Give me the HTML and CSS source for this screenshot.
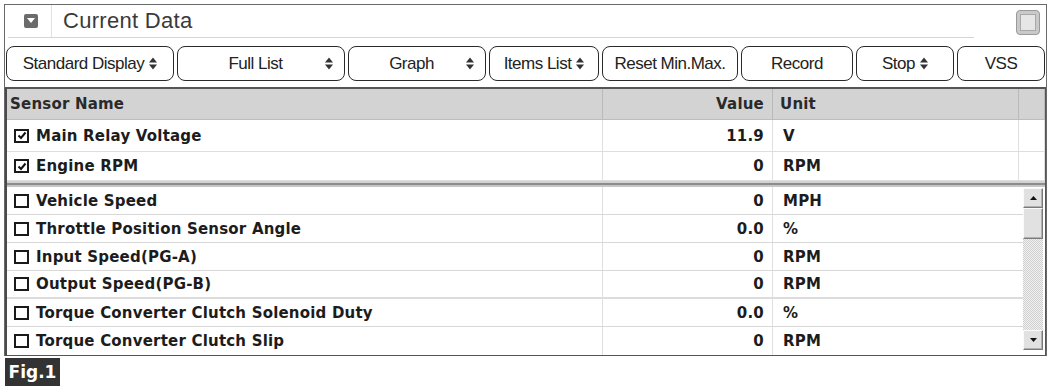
FILE: index.html
```html
<!DOCTYPE html>
<html>
<head>
<meta charset="utf-8">
<link rel="stylesheet" href="styles.css">
</head>
<body>
<div class="window">
  <div class="titlebar">
    <div class="icon-cell">
      <span class="collapse-icon"><svg width="8" height="6" viewBox="0 0 8 6"><polygon points="0,0 8,0 4,5" fill="#fff"/></svg></span>
    </div>
    <div class="title">Current Data</div>
    <div class="max-btn"><span class="max-inner"></span></div>
  </div>
  <div class="title-rule"></div>
  <div class="toolbar">
    <div class="btn btn-inline"><span>Standard Display</span><svg class="spin" width="8" height="13" viewBox="0 0 8 13"><polygon points="0,5.5 4,0.5 8,5.5"/><polygon points="0,7.5 4,12.5 8,7.5"/></svg></div>
    <div class="btn btn-wide"><span class="lbl">Full List</span><svg class="spin" width="8" height="13" viewBox="0 0 8 13"><polygon points="0,5.5 4,0.5 8,5.5"/><polygon points="0,7.5 4,12.5 8,7.5"/></svg></div>
    <div class="btn btn-wide"><span class="lbl">Graph</span><svg class="spin" width="8" height="13" viewBox="0 0 8 13"><polygon points="0,5.5 4,0.5 8,5.5"/><polygon points="0,7.5 4,12.5 8,7.5"/></svg></div>
    <div class="btn btn-inline"><span>Items List</span><svg class="spin" width="8" height="13" viewBox="0 0 8 13"><polygon points="0,5.5 4,0.5 8,5.5"/><polygon points="0,7.5 4,12.5 8,7.5"/></svg></div>
    <div class="btn"><span>Reset Min.Max.</span></div>
    <div class="btn"><span>Record</span></div>
    <div class="btn btn-inline"><span>Stop</span><svg class="spin" width="8" height="13" viewBox="0 0 8 13"><polygon points="0,5.5 4,0.5 8,5.5"/><polygon points="0,7.5 4,12.5 8,7.5"/></svg></div>
    <div class="btn"><span>VSS</span></div>
  </div>
  <div class="table">
    <div class="row head">
      <div class="c-name">Sensor Name</div>
      <div class="c-val">Value</div>
      <div class="c-unit">Unit</div>
      <div class="c-end"></div>
    </div>
    <div class="row pinned first">
      <div class="c-name"><span class="cb checked"><svg width="10" height="9" viewBox="0 0 10 9"><polyline points="1.5,4.5 4,7 8.5,1.5" fill="none" stroke="#111" stroke-width="2"/></svg></span>Main Relay Voltage</div>
      <div class="c-val">11.9</div>
      <div class="c-unit">V</div>
      <div class="c-end"></div>
    </div>
    <div class="row pinned">
      <div class="c-name"><span class="cb checked"><svg width="10" height="9" viewBox="0 0 10 9"><polyline points="1.5,4.5 4,7 8.5,1.5" fill="none" stroke="#111" stroke-width="2"/></svg></span>Engine RPM</div>
      <div class="c-val">0</div>
      <div class="c-unit">RPM</div>
      <div class="c-end"></div>
    </div>
    <div class="splitter"></div>
    <div class="scroll-area">
      <div class="rows">
        <div class="row body-row"><div class="c-name"><span class="cb"></span>Vehicle Speed</div><div class="c-val">0</div><div class="c-unit">MPH</div></div>
        <div class="row body-row"><div class="c-name"><span class="cb"></span>Throttle Position Sensor Angle</div><div class="c-val">0.0</div><div class="c-unit">%</div></div>
        <div class="row body-row"><div class="c-name"><span class="cb"></span>Input Speed(PG-A)</div><div class="c-val">0</div><div class="c-unit">RPM</div></div>
        <div class="row body-row thick"><div class="c-name"><span class="cb"></span>Output Speed(PG-B)</div><div class="c-val">0</div><div class="c-unit">RPM</div></div>
        <div class="row body-row"><div class="c-name"><span class="cb"></span>Torque Converter Clutch Solenoid Duty</div><div class="c-val">0.0</div><div class="c-unit">%</div></div>
        <div class="row body-row last"><div class="c-name"><span class="cb"></span>Torque Converter Clutch Slip</div><div class="c-val">0</div><div class="c-unit">RPM</div></div>
      </div>
      <div class="scrollbar">
        <div class="sb-btn"><svg width="7" height="4" viewBox="0 0 7 4"><polygon points="0,4 3.5,0 7,4" fill="#111"/></svg></div>
        <div class="sb-thumb"></div>
        <div class="sb-track"></div>
        <div class="sb-btn"><svg width="7" height="4" viewBox="0 0 7 4"><polygon points="0,0 3.5,4 7,0" fill="#111"/></svg></div>
      </div>
    </div>
  </div>
</div>
<div class="fig">Fig.1</div>
</body>
</html>
```

FILE: styles.css
```css
html, body {
  margin: 0;
  padding: 0;
  background: #fff;
}

.window {
  margin: 4px 0 0 4px;
  width: 1041px;
  border: 1px solid #6a6a6a;
  border-bottom: none;
  font-family: "Liberation Sans", Arial, sans-serif;
}

.titlebar {
  display: flex;
  align-items: center;
  height: 32px;
}

.icon-cell {
  width: 47px;
  height: 32px;
  border-right: 1px solid #e2e2e2;
  display: flex;
  align-items: center;
  padding-left: 19px;
  box-sizing: border-box;
}

.collapse-icon {
  width: 14px;
  height: 14px;
  background: #6b6b6b;
  border-radius: 2px;
  display: flex;
  align-items: center;
  justify-content: center;
}

.title {
  padding-left: 11px;
  font-size: 22px;
  color: #3a3a3a;
  letter-spacing: 0.3px;
}

.max-btn {
  margin-left: auto;
  margin-right: 6px;
  margin-top: 2px;
  width: 24px;
  height: 25px;
  box-sizing: border-box;
  border: 1px solid #9a9a9a;
  border-radius: 4px;
  background: #c9c9c9;
  display: flex;
  align-items: center;
  justify-content: center;
}

.max-inner {
  width: 14px;
  height: 15px;
  background: #e6e6e6;
  border: 1px solid #a8a8a8;
}

.title-rule {
  height: 1px;
  background: #d6d6d6;
  margin: 0 72px 0 3px;
}

.toolbar {
  display: grid;
  grid-template-columns: 168px 168px 138px 110px 136px 112px 98px 88px;
  gap: 3px;
  padding: 8px 0 6px 1px;
}

.btn {
  height: 35px;
  box-sizing: border-box;
  border: 1.5px solid #2a2a2a;
  border-radius: 8px;
  display: flex;
  align-items: center;
  justify-content: center;
  gap: 5px;
  font-size: 17px;
  letter-spacing: -0.5px;
  color: #222;
}

.spin polygon {
  fill: #333;
}

.btn-wide {
  display: grid;
  grid-template-columns: 1fr auto 1fr;
  padding: 0 11px 0 0;
}

.btn-wide .lbl {
  grid-column: 2;
}

.btn-wide .spin {
  grid-column: 3;
  justify-self: end;
}

.table {
  border-top: 2px solid #555;
  border-left: 2px solid #4a4a4a;
  border-right: 1px solid #555;
  border-bottom: 1px solid #555;
  font-family: "DejaVu Sans", sans-serif;
  font-weight: bold;
  font-size: 15px;
  letter-spacing: 0.2px;
  color: #1c1c1c;
}

.row {
  display: grid;
  grid-template-columns: 596px 170px 246px 1fr;
  box-sizing: border-box;
}

.row > div {
  display: flex;
  align-items: center;
  box-sizing: border-box;
}

.head {
  height: 31px;
  background: #d3d3d3;
  border-bottom: 1px solid #bdbdbd;
  color: #2a2a2a;
}

.head > div {
  border-right: 1px solid #b9b9b9;
}

.head .c-name {
  padding-left: 3px;
}

.head .c-unit {
  padding-left: 7px;
}

.pinned {
  height: 29px;
  border-bottom: 1px solid #dedede;
}

.pinned.first {
  height: 32px;
}

.pinned > div {
  border-right: 1px solid #e0e0e0;
}

.c-name {
  padding-left: 7px;
  white-space: nowrap;
}

.c-val {
  justify-content: flex-end;
  padding-right: 8px;
}

.c-unit {
  padding-left: 10px;
}

.cb {
  width: 15px;
  height: 14px;
  box-sizing: border-box;
  border: 2px solid #1a1a1a;
  margin-right: 7px;
  flex: none;
  display: flex;
  align-items: center;
  justify-content: center;
  background: #fff;
}

.splitter {
  height: 2px;
  border-top: 2px solid #d2d2d2;
  border-bottom: 2px solid #c6c6c6;
  background: #8c8c8c;
}

.scroll-area {
  height: 168px;
  display: flex;
  overflow: hidden;
}

.rows {
  flex: 1;
}

.body-row {
  grid-template-columns: 596px 170px 1fr;
  height: 28px;
  border-bottom: 1px solid #d8d8d8;
}

.body-row.thick {
  border-bottom: 2px solid #dcdcdc;
}

.body-row.last {
  border-bottom: none;
}

.body-row > div {
  border-right: 1px solid #e0e0e0;
}

.body-row > div:last-child {
  border-right: none;
}

.scrollbar {
  width: 20px;
  margin: 1px 2px 5px 0;
  display: flex;
  flex-direction: column;
  background: repeating-conic-gradient(#cfcfcf 0 25%, #f2f2f2 0 50%) 0 0 / 2px 2px;
}

.sb-btn, .sb-thumb {
  box-sizing: border-box;
  background: #e1e1e1;
  border-top: 1px solid #fafafa;
  border-left: 1px solid #fafafa;
  border-right: 1px solid #7a7a7a;
  border-bottom: 1px solid #7a7a7a;
  box-shadow: inset -1px -1px 0 #b0b0b0;
}

.sb-btn {
  height: 20px;
  display: flex;
  align-items: center;
  justify-content: center;
}

.sb-thumb {
  height: 31px;
}

.sb-track {
  flex: 1;
}

.fig {
  margin: 2px 0 0 5px;
  width: 55px;
  height: 28px;
  background: #333;
  color: #fff;
  font-family: "DejaVu Sans", sans-serif;
  font-weight: bold;
  font-size: 17px;
  display: flex;
  align-items: center;
  justify-content: center;
}
```
